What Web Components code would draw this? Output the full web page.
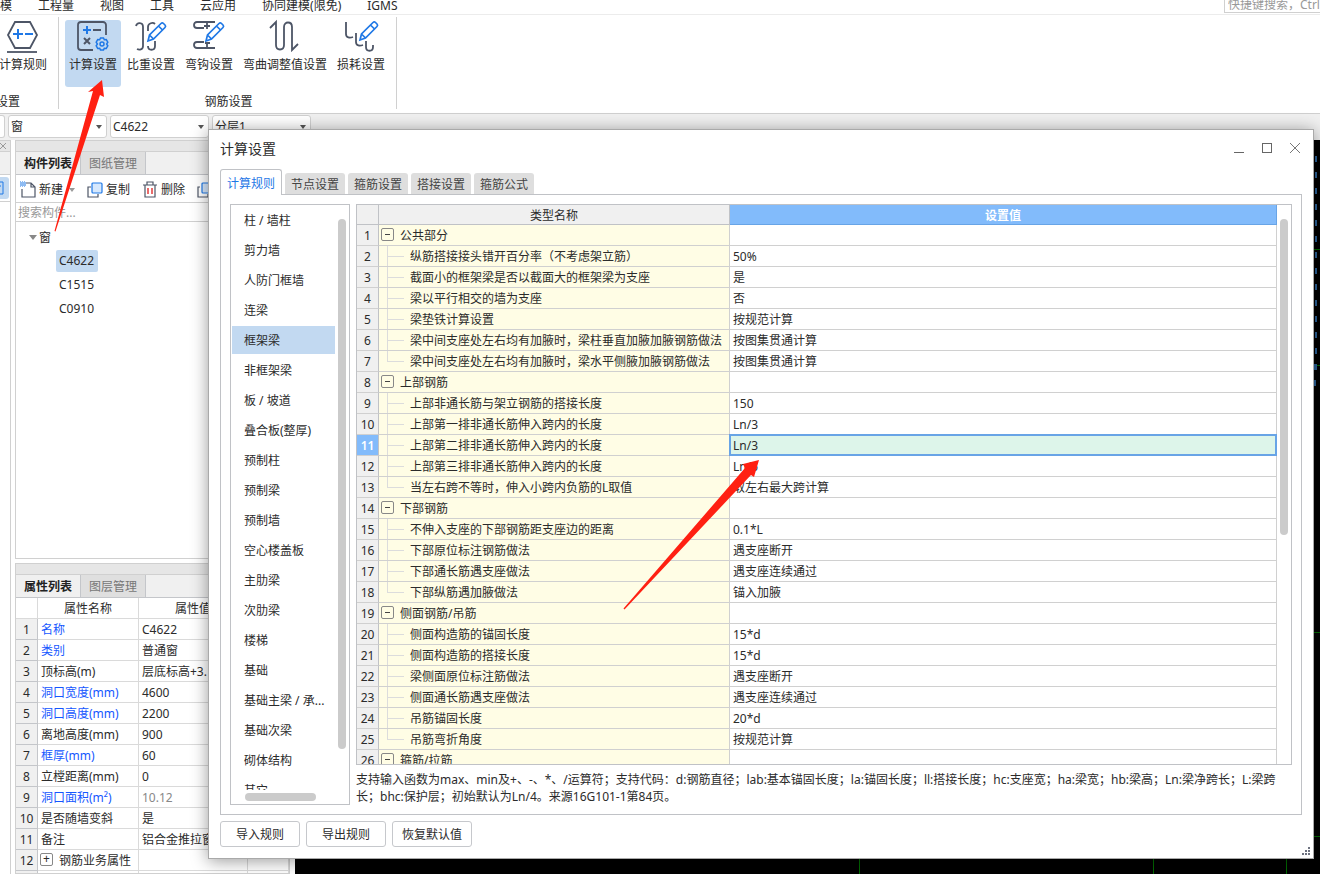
<!DOCTYPE html>
<html lang="zh-CN">
<head>
<meta charset="utf-8">
<title>计算设置</title>
<style>
html,body{margin:0;height:100%;overflow:hidden}
body{font:12px/20px "Noto Sans","Noto Sans CJK SC",sans-serif;color:#2b2b2b;background:#fff;
--line:#d0d0d0;--frame:#c0c2c6;--sel:#c2d9f1;--blue:#1f78e6;--ink:#4d5566}
</style>
</head>
<body>
<app-shell></app-shell>
<script>
const reset = `*,*::before,*::after{box-sizing:border-box}
button,select,input{font:inherit;color:inherit;margin:0;padding:0;border:0;background:none;border-radius:0}
ul{list-style:none;margin:0;padding:0}svg{display:block;flex:none}table{border-collapse:separate;border-spacing:0;table-layout:fixed;width:100%}`;
function define(name, css, html) {
  customElements.define(name, class extends HTMLElement {
    connectedCallback() {
      if (this.shadowRoot) return;
      const root = this.attachShadow({mode: 'open'});
      root.innerHTML = `<style>${reset}${css}</style>${typeof html === 'function' ? html(this) : html}`;
    }
  });
}

/* ---------- menu bar ---------- */
define('menu-bar', `
:host{display:flex;justify-content:space-between;height:15px;border-bottom:1px solid #ececec}
nav{display:flex;gap:26px;white-space:nowrap}
button{height:12px;line-height:12px}
input{width:96px;height:13px;line-height:12px;border:1px solid var(--line);border-top:0;border-right:0;padding:0 0 3px 3px}
input::placeholder{color:#999;opacity:1}`,
`<nav aria-label="主菜单">${['模','工程量','视图','工具','云应用','协同建模(限免)','IGMS'].map(t => `<button>${t}</button>`).join('')}</nav>
<input aria-label="快捷键搜索" placeholder="快捷键搜索，Ctrl">`);

/* ---------- ribbon ---------- */
const pencil = (x, y) => `<path transform="translate(${x} ${y})" d="M1 19l1.500-6L14 1.500a1.800 1.800 0 0 1 2.500 0l1.500 1.500a1.800 1.800 0 0 1 0 2.500L6.500 17z M11.500 4l4 4M2.500 13l4 4" stroke="#1f78e6" fill="none" stroke-width="1.700"/>`;
const icons = {
  rules: `<path d="M1 15L8 2h15l7 13-7 13H8z"/><path d="M0 32h30"/><path stroke="#1f78e6" stroke-width="2" d="M6 14h10M11 9v10M18 14h8"/>`,
  calc: `<path d="M29 15V5a3 3 0 0 0-3-3H4a3 3 0 0 0-3 3v22a3 3 0 0 0 3 3h12"/><path stroke="#1f78e6" stroke-width="2" d="M6 10h8M10 6v8"/><path stroke-width="2" d="M16 10h8M7 18l6 6M13 18l-6 6"/><g stroke="#1f78e6" stroke-width="1.500"><path d="M23.500 18h3l.8 1.800 2-.2 1.500 2.600-1.200 1.800 1.200 1.800-1.500 2.600-2-.2-.8 1.800h-3l-.8-1.800-2 .2-1.500-2.600 1.200-1.800-1.200-1.800 1.500-2.600 2 .2z"/><circle cx="25" cy="24" r="2"/></g>`,
  weight: `<path d="M1 6c1-4 7-4 7 1v19c0 4-4 4-6 3M13 11V7c0-4 5-5 7-3M13 26c0 5 7 5 7 0v-5"/>${pencil(12,2)}`,
  hook: `<path d="M22 2H4C0 2 0 8 4 8h7M14 3v6M11 6h6M22 28H4c-4 0-4-6 0-6h7M14 28v-6M12 23h5"/>${pencil(12,2)}`,
  bend: `<path d="M1 8l6-6v23c0 6 8 6 8 0V7c0-6 8-6 8 0v23l6-6"/>`,
  loss: `<path d="M1 2v12c0 4 4 4 7 3M11 13v9c0 4 4 4 7 3M21 21v6c0 5 7 5 7 0v-2"/>${pencil(14,1)}`
};
define('ribbon-button', `
:host{display:block}
button{display:flex;flex-direction:column;align-items:center;height:67px;padding:0 4px;border-radius:3px;white-space:nowrap}
:host([active]) button{background:var(--sel)}
svg{width:32px;height:32px;overflow:visible;fill:none;stroke:var(--ink);stroke-width:1.800;margin-bottom:3px}`,
el => `<button aria-pressed="${el.hasAttribute('active')}"><svg viewBox="0 0 32 32" aria-hidden="true">${icons[el.getAttribute('icon')]}</svg><slot></slot></button>`);
define('ribbon-group', `
:host{display:grid;grid-template:67px auto/minmax(0,auto);padding:3px 7px 0 6px;border-right:1px solid var(--line);height:92px;overflow:hidden}
:host([cut]){width:59px;grid-template-columns:minmax(0,1fr);padding:3px 7px 0 0}
div{display:flex;gap:2px}
:host([cut]) div{justify-content:flex-end}
footer{text-align:center;line-height:20px;padding:5px 0 0 3px}
:host([cut]) footer{text-align:right;padding-right:31px;white-space:nowrap;direction:rtl;padding-left:0;text-align:left;margin-left:-4px}`,
el => `<div><slot></slot></div><footer>${el.getAttribute('label')}</footer>`);
define('app-ribbon', `:host{display:flex;align-items:flex-start;height:99px;padding-top:2px;border-bottom:1px solid #cfcfcf}`,
`<ribbon-group cut label="设置"><ribbon-button icon="rules">计算规则</ribbon-button></ribbon-group>
<ribbon-group label="钢筋设置"><ribbon-button icon="calc" active>计算设置</ribbon-button><ribbon-button icon="weight">比重设置</ribbon-button><ribbon-button icon="hook">弯钩设置</ribbon-button><ribbon-button icon="bend">弯曲调整值设置</ribbon-button><ribbon-button icon="loss">损耗设置</ribbon-button></ribbon-group>`);

/* ---------- context selectors ---------- */
define('context-bar', `
:host{display:flex;gap:3px;height:26px;background:#f0f0f0;padding-top:1px}
label{display:grid;align-items:center;width:99px;height:23px}
label:first-of-type{width:5px}
select,label::after{grid-area:1/1}
label::after{content:"";justify-self:end;margin-right:5px;border:3px solid transparent;border-top:4px solid #555;border-bottom:0}
label:first-of-type::after{display:none}
select{appearance:none;width:100%;height:23px;padding:0 2px;background:#fff;border:1px solid var(--line);border-radius:3px}
label:first-of-type select{border-left:0;border-radius:0 3px 3px 0}`,
`<label><select aria-label="楼层"></select></label>
<label><select aria-label="构件类型"><option>窗</option></select></label>
<label><select aria-label="构件"><option>C4622</option></select></label>
<label><select aria-label="分层"><option>分层1</option></select></label>`);

/* ---------- docked panels ---------- */
define('side-strip', `
:host{display:block;border-right:1px solid var(--line);background:#fff}
header{display:flex;height:12px;background:#e6e6e6;border:solid var(--line);border-width:1px 0;align-items:center}
.band{height:23px;background:#f0f0f0;border-bottom:1px solid var(--line)}
.tool{height:27px;border-bottom:1px solid var(--line);padding-top:2px}
button{display:grid;align-items:center;width:9px;height:22px;background:var(--sel);border-radius:0 3px 3px 0}`,
`<header><svg width="7" height="8" stroke="#999" fill="none"><path d="M0 1l6 6M6 1L0 7"/></svg></header><div class="band"></div>
<div class="tool"><button aria-label="工具"><svg width="4" height="14" fill="none" stroke="#1f78e6"><path d="M0 1h3v12H0M0 5h1"/></svg></button></div>`);
define('dock-panel', `
:host{display:flex;flex-direction:column;border:1px solid var(--line);overflow:hidden;background:#fff}
header{height:11px;background:#e6e6e6;border-bottom:1px solid var(--line);flex:none}
.tabs{display:flex;height:23px;flex:none;background:#f0f0f0;border-bottom:1px solid #c4c6ca}
button{width:65px;line-height:20px;padding-top:2px;border-right:1px solid #c4c6ca;background:#dfdfdf;color:#777}
button:first-of-type{font-weight:600;color:#222;background:#f0f0f0}`,
el => `<header></header><div class="tabs" role="tablist">${el.getAttribute('tabs').split(',').map((t, i) => `<button role="tab" aria-selected="${!i}">${t}</button>`).join('')}</div><slot></slot>`);
define('component-tree', `
:host{display:block}
.tools{display:flex;align-items:center;height:28px;border-bottom:1px solid var(--line);padding:2px 0 0 4px;overflow:hidden}
.tools button{display:flex;align-items:center;gap:3px;white-space:nowrap;margin-right:12px;flex:none}
.tools svg{fill:none;stroke:#4d5566;stroke-width:1.200}
.tools .caret{border:3px solid transparent;border-top:4px solid #999;border-bottom:0;margin-left:3px}
input{display:block;width:100%;height:19px;border-bottom:1px solid var(--line);padding:2px 0 0 2px}
input::placeholder{color:#999;opacity:1}
summary{display:flex;align-items:center;gap:2px;height:24px;padding:1px 0 0 13px;list-style:none}
summary::before{content:"";border:4px solid transparent;border-top:5px solid #888;border-bottom:0}
details{padding-top:3px}
li{padding:1px 0 1px 40px}
li button{display:block;height:22px;padding:0 4px 0 3px;border-radius:2px}
li button[aria-selected=true]{background:var(--sel)}`,
`<div class="tools">
<button><svg width="16" height="17"><path d="M6 2h5l4 4v10H2V8M11 2v4h4"/><path stroke="#1f78e6" stroke-dasharray="1 1" d="M0 1h5M1 2h5M0 3h5M1 4h5M0 5h5"/></svg>新建<span class="caret"></span></button>
<button><svg width="16" height="16"><path d="M4 5H1v10h10v-3"/><rect x="5" y="1" width="10" height="10" rx="1" fill="#d6e8fd" stroke="#1f78e6"/></svg>复制</button>
<button><svg width="16" height="17"><path d="M1 4h14M5 4V1h6v3M3 4v12h10V4"/><path stroke="#e23b3b" stroke-width="1.500" d="M6 7v6M10 7v6"/></svg>删除</button>
<button aria-label="层间复制"><svg width="16" height="16"><path d="M3 5H1v10h10v-3"/><rect x="5" y="1" width="10" height="10" rx="1" fill="#d6e8fd" stroke="#1f78e6"/></svg></button></div>
<input aria-label="搜索构件" placeholder="搜索构件...">
<details open><summary>窗</summary><ul><li><button aria-selected="true">C4622</button></li><li><button>C1515</button></li><li><button>C0910</button></li></ul></details>`);

const props = [['名称','C4622',1],['类别','普通窗',1],['顶标高(m)','层底标高+3.'],['洞口宽度(mm)','4600',1],['洞口高度(mm)','2200',1],['离地高度(mm)','900'],['框厚(mm)','60',1],['立樘距离(mm)','0'],['洞口面积(m²)','10.12',1],['是否随墙变斜','是'],['备注','铝合金推拉窗'],['钢筋业务属性','']];
define('property-grid', `
:host{display:block}
th,td{height:21px;line-height:18px;padding:2px 3px 0;border:solid #dadada;border-width:0 1px 1px 0;text-align:left;font-weight:400;white-space:nowrap;overflow:hidden}
thead th{text-align:center}
tbody th{background:#f0f0f0;text-align:center;padding:2px 0 0;border-color:#c4c6ca}
.key{color:#1557ff}.dim{color:#888}
.group{display:flex;align-items:flex-start;gap:6px;height:18px}
.group::before{content:"+";width:13px;height:13px;border:1px solid #888;border-radius:2px;line-height:10px;text-align:center;margin:1px 0 0 -1px}`,
`<table><colgroup><col style="width:22px"><col style="width:101px"><col style="width:109px"><col></colgroup><thead><tr><th></th><th>属性名称</th><th>属性值</th><th></th></tr></thead><tbody>${props.map((p, i) => `<tr><th>${i + 1}</th><td class="${p[2] ? 'key' : ''}">${i === 11 ? `<div class="group">${p[0]}</div>` : p[0]}</td><td class="${i === 8 ? 'dim' : ''}">${p[1]}</td><td></td></tr>`).join('')}<tr><th></th><td></td><td></td><td></td></tr></tbody></table>`);

/* ---------- drawing area ---------- */
define('cad-canvas', `:host{display:flex;justify-content:flex-end;background:#000;overflow:hidden}`,
`<svg width="1025" height="734" fill="none" aria-label="绘图区"><path stroke="#006a00" d="M0 109.500h1025M0 225.500h1025M0 492.500h1025M0 696.500h1025M564.500 0v734M858.500 0v734M991.500 0v734"/><path stroke="#2b629a" stroke-width="2" stroke-dasharray="6 10" d="M1021 16v214"/><path stroke="#2b629a" stroke-width="2" stroke-dasharray="6 10" d="M1020 224v22"/></svg>`);

/* ---------- dialog ---------- */
define('tab-strip', `
:host{display:flex;gap:3px;align-items:flex-end;height:26px;margin-bottom:-1px;z-index:1}
button{height:21px;width:60px;line-height:19px;padding-top:2px;background:#dedede;color:#444;border-radius:3px 3px 0 0;margin-bottom:1px}
button:first-of-type{height:26px;width:62px;line-height:22px;background:#fff;color:var(--blue);border:1px solid var(--frame);border-bottom:0;margin:0}`,
['计算规则','节点设置','箍筋设置','搭接设置','箍筋公式'].map((t, i) => `<button role="tab" aria-selected="${!i}">${t}</button>`).join(''));

const cats = ['柱 / 墙柱','剪力墙','人防门框墙','连梁','框架梁','非框架梁','板 / 坡道','叠合板(整厚)','预制柱','预制梁','预制墙','空心楼盖板','主肋梁','次肋梁','楼梯','基础','基础主梁 / 承...','基础次梁','砌体结构','其它'];
define('category-list', `
:host{display:grid;grid-template:minmax(0,1fr) 14px/minmax(0,1fr) 14px;border:1px solid var(--frame);width:120px;flex:none;overflow:hidden}
ul{overflow:hidden;padding:1px 0 0 1px}
li{height:30px}
button{display:block;width:100%;height:28px;text-align:left;padding:2px 0 0 12px;white-space:nowrap}
button[aria-selected=true]{background:var(--sel)}
.v,.h{background:#cbcbcb;border-radius:4px}
.v{width:8px;margin:14px 0 41px 3px}
.h{height:8px;width:71px;margin:3px 0 0 14px}`,
`<ul>${cats.map(c => `<li><button aria-selected="${c === '框架梁'}">${c}</button></li>`).join('')}</ul><div class="v"></div><div class="h"></div>`);

const rules = ['#公共部分','纵筋搭接接头错开百分率（不考虑架立筋）|50%','截面小的框架梁是否以截面大的框架梁为支座|是','梁以平行相交的墙为支座|否','梁垫铁计算设置|按规范计算','梁中间支座处左右均有加腋时，梁柱垂直加腋加腋钢筋做法|按图集贯通计算','梁中间支座处左右均有加腋时，梁水平侧腋加腋钢筋做法|按图集贯通计算','#上部钢筋','上部非通长筋与架立钢筋的搭接长度|150','上部第一排非通长筋伸入跨内的长度|Ln/3','上部第二排非通长筋伸入跨内的长度|Ln/3','上部第三排非通长筋伸入跨内的长度|Ln/5','当左右跨不等时，伸入小跨内负筋的L取值|取左右最大跨计算','#下部钢筋','不伸入支座的下部钢筋距支座边的距离|0.1*L','下部原位标注钢筋做法|遇支座断开','下部通长筋遇支座做法|遇支座连续通过','下部纵筋遇加腋做法|锚入加腋','#侧面钢筋/吊筋','侧面构造筋的锚固长度|15*d','侧面构造筋的搭接长度|15*d','梁侧面原位标注筋做法|遇支座断开','侧面通长筋遇支座做法|遇支座连续通过','吊筋锚固长度|20*d','吊筋弯折角度|按规范计算','#箍筋/拉筋'];
define('rule-table', `
:host{display:grid;grid-template-columns:minmax(0,1fr) 14px;border:1px solid var(--frame);overflow:hidden;min-height:0}
.view{overflow:hidden}
.bar{width:8px;height:316px;margin:14px 0 0 3px;border-radius:4px;background:#cbcbcb}
th,td{height:21px;line-height:18px;padding:2px 3px 0;border:solid var(--line);border-width:0 1px 1px 0;text-align:left;font-weight:400;white-space:nowrap}
thead th{height:20px;line-height:17px;padding:2px 0 0;text-align:center;background:#f0f0f0;border-color:var(--frame)}
thead th:last-child{background:#82bbfb;border-color:#68a4e6;color:#fff;font-weight:600}
tbody th{background:#f0f0f0;text-align:center;padding:2px 0 0;border-right-color:var(--frame)}
tbody td:nth-child(2){background:#fffde5;padding:0}
.on th{background:#82bbfb;color:#fff;font-weight:600}
.on td:last-child{background:#ddf5ea;position:relative}
.on td:last-child::after{content:"";position:absolute;inset:-1px;border:2px solid #68a4e6}
.item,.group{display:flex;height:20px}
.item span,.group span{padding-top:2px}
.item i{width:17px;margin:0 6px 0 8px;background:linear-gradient(#dcdcdc,#dcdcdc) 0 0/1px 100% no-repeat,linear-gradient(#dcdcdc,#dcdcdc) 0 10px/100% 1px no-repeat}
.last i{background-size:1px 10px,100% 1px}
.group{gap:6px;padding-left:2px}
.group button{display:grid;place-items:center;width:13px;height:13px;margin-top:3px;border:1px solid #888;border-radius:2px}
.group button::before{content:"";width:5px;height:1px;background:#444}`,
`<div class="view"><table><colgroup><col style="width:22px"><col style="width:351px"><col></colgroup><thead><tr><th></th><th>类型名称</th><th>设置值</th></tr></thead><tbody>${rules.map((r, i) => {
  const group = r[0] === '#', [name, value = ''] = r.replace('#', '').split('|');
  const last = !rules[i + 1] || rules[i + 1][0] === '#';
  return `<tr class="${i === 10 ? 'on' : ''}"><th>${i + 1}</th><td>${group ? `<div class="group"><button aria-label="折叠"></button><span>${name}</span></div>` : `<div class="item ${last ? 'last' : ''}"><i></i><span>${name}</span></div>`}</td><td>${value}</td></tr>`;
}).join('')}</tbody></table></div><div class="bar"></div>`);

define('settings-dialog', `
:host{display:flex;flex-direction:column;background:#fff;border:1px solid #a9a9a9;padding:0 11px 0;box-shadow:0 2px 16px rgba(0,0,0,.4)}
header{display:flex;justify-content:space-between;align-items:center;height:36px;margin-bottom:3px;flex:none}
h1{font-size:14px;line-height:20px;font-weight:400;margin:0;padding-top:2px}
header div{display:flex;gap:16px;margin-right:1px}
header button,header svg{width:12px;height:12px}
.frame{flex:1;min-height:0;display:flex;gap:6px;border:1px solid var(--frame);padding:9px}
.main{flex:1;min-width:0;display:flex;flex-direction:column}
rule-table{flex:1}
p{margin:0;padding:6px 12px 0 0;line-height:17px;height:40px}
footer{display:flex;gap:6px;height:43px;padding-top:6px;flex:none}
footer button{width:80px;height:26px;padding-top:2px;border:1px solid #c6c8cc;border-radius:3px}
footer svg{margin:26px -8px 0 auto}`,
`<header><h1>计算设置</h1><div><button aria-label="最小化"><svg stroke="#666"><path d="M1 10.500h10"/></svg></button><button aria-label="最大化"><svg stroke="#666" fill="none"><rect x="1.500" y="1.500" width="9" height="9"/></svg></button><button aria-label="关闭"><svg stroke="#777"><path d="M1 1l10 10M11 1L1 11"/></svg></button></div></header>
<tab-strip role="tablist"></tab-strip>
<div class="frame"><category-list></category-list><div class="main"><rule-table></rule-table><p>支持输入函数为max、min及+、-、*、/运算符；支持代码：d:钢筋直径；lab:基本锚固长度；la:锚固长度；ll:搭接长度；hc:支座宽；ha:梁宽；hb:梁高；Ln:梁净跨长；L:梁跨长；bhc:保护层；初始默认为Ln/4。来源16G101-1第84页。</p></div></div>
<footer><button>导入规则</button><button>导出规则</button><button>恢复默认值</button><svg width="8" height="8" fill="#6d7280" aria-hidden="true"><path d="M6 0h2v2H6zM3 3h2v2H3zM6 3h2v2H6zM0 6h2v2H0zM3 6h2v2H3zM6 6h2v2H6z"/></svg></footer>`);

/* ---------- shell ---------- */
define('app-shell', `
:host{position:relative;display:grid;grid-template-rows:auto auto auto minmax(0,1fr);height:100vh;overflow:hidden}
.work{display:grid;grid-template-columns:11px 275px minmax(0,1fr);column-gap:4px;min-height:0}
.docks{display:grid;grid-template-rows:419px minmax(0,1fr);gap:4px;min-height:0}
cad-canvas{margin-left:1px}
settings-dialog{position:absolute;inset:129px 6px 15px 208px}
.arrows{position:absolute;left:0;top:0;pointer-events:none}`,
`<menu-bar></menu-bar><app-ribbon></app-ribbon><context-bar></context-bar>
<div class="work"><side-strip></side-strip><div class="docks"><dock-panel tabs="构件列表,图纸管理"><component-tree></component-tree></dock-panel><dock-panel tabs="属性列表,图层管理"><property-grid></property-grid></dock-panel></div><cad-canvas></cad-canvas></div>
<settings-dialog role="dialog" aria-label="计算设置"></settings-dialog>
<svg class="arrows" width="800" height="620" fill="#ff2012" aria-hidden="true"><path d="M102 80L88 92l5-1L54.500 231l1 .5L100 95l4 2zM759 460l-16 4 2 4-121.500 140.500 1 1L751 475l3 2z"/></svg>`);
</script>
</body>
</html>
